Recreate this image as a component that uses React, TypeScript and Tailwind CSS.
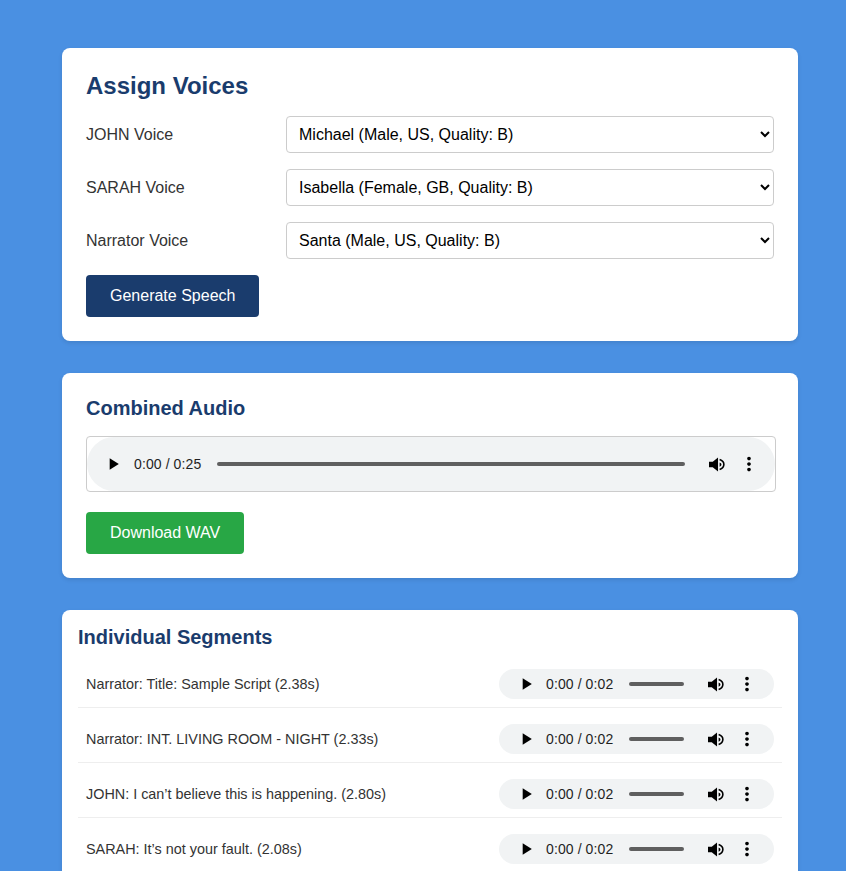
const voices = [
  { label: "JOHN Voice", value: "Michael (Male, US, Quality: B)" },
  { label: "SARAH Voice", value: "Isabella (Female, GB, Quality: B)" },
  { label: "Narrator Voice", value: "Santa (Male, US, Quality: B)" },
];

const segments = [
  "Narrator: Title: Sample Script (2.38s)",
  "Narrator: INT. LIVING ROOM - NIGHT (2.33s)",
  "JOHN: I can’t believe this is happening. (2.80s)",
  "SARAH: It’s not your fault. (2.08s)",
];

// chrome's native audio controls, drawn so the duration shows without a file
const AudioControls = ({ time, compact }: { time: string; compact?: boolean }) => {
  return (
    <div
      className={
        compact
          ? "flex items-center bg-[#f1f3f4] rounded-[15px] w-[275px] h-[30px] pl-[17px] text-[#1f1f1f]"
          : "flex items-center bg-[#f1f3f4] rounded-[27px] w-full h-full pl-[16px] text-[#1f1f1f]"
      }
    >
      <svg viewBox="0 0 24 24" className="w-5 h-5 shrink-0 fill-black">
        <path d="M8 5v14l11-7z" />
      </svg>
      <span className={compact ? "ml-[10px] text-[14px] tracking-[0.1px] leading-none whitespace-nowrap w-[67px] shrink-0" : "ml-[11px] text-[14px] tracking-[0.1px] leading-none whitespace-nowrap w-[67px] shrink-0"}>{time}</span>
      <div className={compact ? "ml-4 w-[55px] h-1 rounded-full bg-[#5f5f5f] shrink-0" : "ml-4 w-[468px] h-1 rounded-full bg-[#5f5f5f] shrink-0"} />
      <svg viewBox="0 0 16 14" className="ml-6 w-[17px] h-[15px] shrink-0 fill-black">
        <path d="M0 4.5h3.5L8.5.5v13l-5-4H0z" />
        <path d="M10 5v4c1-.4 1.7-1.1 1.7-2S11 5.4 10 5z" />
        <path d="M10 2.4c2.3.8 4 2.4 4 4.6s-1.7 3.8-4 4.6" fill="none" stroke="black" strokeWidth="1.5" />
      </svg>
      <svg viewBox="0 0 24 24" className={compact ? "ml-[11px] w-[22px] h-[22px] shrink-0 fill-black" : "ml-3 w-[22px] h-[22px] shrink-0 fill-black"}>
        <path d="M12 8c1.1 0 2-.9 2-2s-.9-2-2-2-2 .9-2 2 .9 2 2 2zm0 2c-1.1 0-2 .9-2 2s.9 2 2 2 2-.9 2-2-.9-2-2-2zm0 6c-1.1 0-2 .9-2 2s.9 2 2 2 2-.9 2-2-.9-2-2-2z" />
      </svg>
    </div>
  );
};

const App = () => {
  return (
    <div className="h-[871px] overflow-hidden bg-[#4a90e2] font-['Liberation_Sans',Arial,sans-serif] text-[#333]">
      <div className="ml-[62px] w-[736px] pt-12 flex flex-col gap-8">
        {/* Voices */}
        <section className="bg-white rounded-lg p-6 shadow-[0_2px_4px_rgba(0,0,0,0.1)]">
          <h1 className="text-[24px] leading-[28px] font-bold text-[#1a3c6d] mb-4">Assign Voices</h1>
          {voices.map((v) => (
            <div key={v.label} className="flex items-center mb-4">
              <label className="w-[200px] shrink-0 text-[16px]">{v.label}</label>
              <select
                defaultValue={v.value}
                className="flex-1 h-[37px] px-2 text-[16px] text-black bg-white border border-[#ccc] rounded"
              >
                <option>{v.value}</option>
              </select>
            </div>
          ))}
          <button className="block h-[42px] px-6 bg-[#1a3c6d] text-white text-[16px] rounded">Generate Speech</button>
        </section>

        {/* Combined */}
        <section className="bg-white rounded-lg p-6 shadow-[0_2px_4px_rgba(0,0,0,0.1)]">
          <h2 className="text-[20px] leading-[23px] font-bold text-[#1a3c6d] mb-4">Combined Audio</h2>
          <div className="w-[690px] h-[56px] border border-[#ccc] rounded mb-5">
            <AudioControls time="0:00 / 0:25" />
          </div>
          <button className="block h-[42px] px-6 bg-[#28a745] text-white text-[16px] rounded">Download WAV</button>
        </section>

        {/* Segments */}
        <section className="bg-white rounded-lg p-4 shadow-[0_2px_4px_rgba(0,0,0,0.1)]">
          <h2 className="text-[20px] leading-[23px] font-bold text-[#1a3c6d] mb-3">Individual Segments</h2>
          <ul>
            {segments.map((s) => (
              <li key={s} className="flex items-center justify-between p-2 mb-2 border-b border-[#eee]">
                <span className="text-[14.4px] pt-0.5">{s}</span>
                <AudioControls time="0:00 / 0:02" compact />
              </li>
            ))}
          </ul>
        </section>
      </div>
    </div>
  );
};

export default App;
